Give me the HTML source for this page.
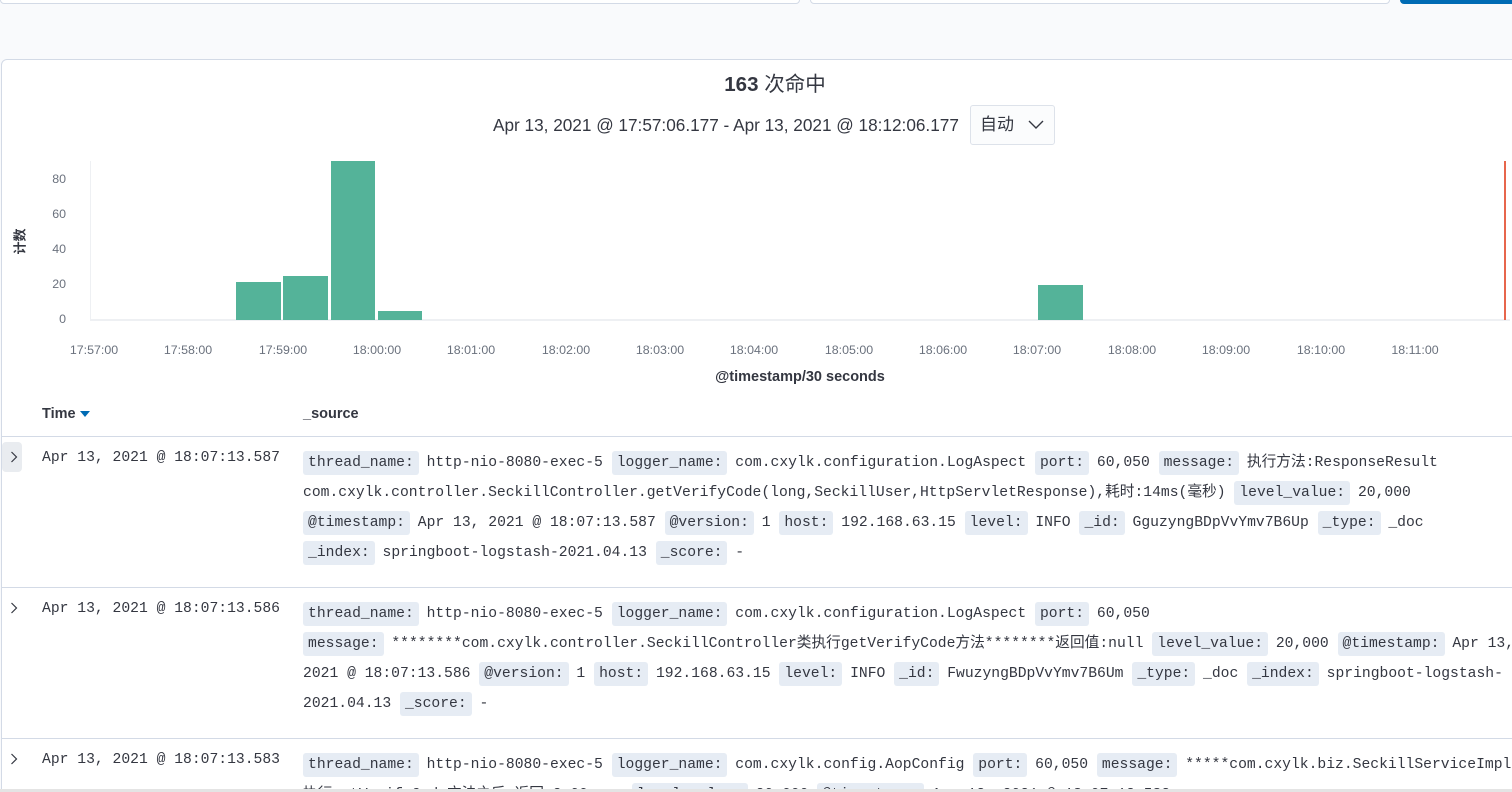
<!DOCTYPE html>
<html><head><meta charset="utf-8"><style>
*{margin:0;padding:0;box-sizing:border-box}
html,body{width:1512px;height:792px;overflow:hidden;background:#f9fafc;font-family:"Liberation Sans","Noto Sans CJK SC",sans-serif;color:#343741;position:relative}
.abs{position:absolute}
.card{position:absolute;left:1px;top:59px;width:1530px;height:760px;background:#fff;border:1px solid #d3dae6;border-radius:6px}
.mono{font-family:"Liberation Mono","Noto Sans CJK SC",monospace;font-size:14.7px;white-space:nowrap;color:#343741}
.ln{position:absolute;left:303px;height:30px;line-height:30px}
.p{background:#e6ecf4;border-radius:3px;padding:4px 5px;margin-right:-1px}
.sep{position:absolute;left:1px;width:1512px;height:1px;background:#d3dae6}
.xl{position:absolute;top:343px;font-size:12.4px;color:#6a717d;width:80px;text-align:center}
.yl{position:absolute;left:40px;font-size:12.4px;color:#6a717d;width:26px;text-align:right}
.bar{position:absolute;background:#54b399}
</style></head><body>
<div class="abs" style="left:0;top:-6px;width:800px;height:10px;background:#fff;border:1px solid #d3dae6;border-radius:4px"></div>
<div class="abs" style="left:810px;top:-6px;width:580px;height:10px;background:#fff;border:1px solid #d3dae6;border-radius:4px"></div>
<div class="abs" style="left:1400px;top:-6px;width:120px;height:10px;background:#006bb4;border-radius:4px"></div>
<div class="card"></div>
<div class="abs" style="left:0;top:72px;width:1550px;text-align:center;font-size:20.5px;line-height:26px"><b>163</b> 次命中</div>
<div class="abs" style="left:493px;top:113px;font-size:17.2px;line-height:24px">Apr 13, 2021 @ 17:57:06.177 - Apr 13, 2021 @ 18:12:06.177</div>
<div class="abs" style="left:970px;top:105px;width:85px;height:40px;border:1px solid #dde2ea;border-radius:3px;background:#fbfcfd;font-size:17px;line-height:38px;padding-left:9px">自动<svg style="position:absolute;left:57px;top:14px" width="16" height="10" viewBox="0 0 16 10"><path d="M1 1l7 7 7-7" fill="none" stroke="#343741" stroke-width="1.4"/></svg></div>
<div class="abs" style="left:90px;top:161px;width:1px;height:159px;background:#eef0f3"></div>
<div class="abs" style="left:90px;top:319px;width:1420px;height:2px;background:#eef0f3"></div>
<div class="yl" style="top:172px">80</div>
<div class="yl" style="top:207px">60</div>
<div class="yl" style="top:242px">40</div>
<div class="yl" style="top:277px">20</div>
<div class="yl" style="top:312px">0</div>
<div class="abs" style="left:4px;top:232px;font-size:13px;font-weight:bold;transform:rotate(-90deg);transform-origin:center;width:30px;text-align:center">计数</div>
<div class="bar" style="left:236px;top:282px;width:45px;height:38px"></div>
<div class="bar" style="left:283px;top:276px;width:45px;height:44px"></div>
<div class="bar" style="left:331px;top:161px;width:44px;height:159px"></div>
<div class="bar" style="left:378px;top:311px;width:44px;height:9px"></div>
<div class="bar" style="left:1038px;top:285px;width:45px;height:35px"></div>
<div class="abs" style="left:1504px;top:161px;width:2px;height:159px;background:#e7664c"></div>
<div class="xl" style="left:54px">17:57:00</div>
<div class="xl" style="left:148px">17:58:00</div>
<div class="xl" style="left:243px">17:59:00</div>
<div class="xl" style="left:337px">18:00:00</div>
<div class="xl" style="left:431px">18:01:00</div>
<div class="xl" style="left:526px">18:02:00</div>
<div class="xl" style="left:620px">18:03:00</div>
<div class="xl" style="left:714px">18:04:00</div>
<div class="xl" style="left:809px">18:05:00</div>
<div class="xl" style="left:903px">18:06:00</div>
<div class="xl" style="left:997px">18:07:00</div>
<div class="xl" style="left:1092px">18:08:00</div>
<div class="xl" style="left:1186px">18:09:00</div>
<div class="xl" style="left:1281px">18:10:00</div>
<div class="xl" style="left:1375px">18:11:00</div>
<div class="abs" style="left:0;top:368px;width:1600px;text-align:center;font-size:14.5px;font-weight:bold;line-height:18px">@timestamp/30 seconds</div>
<div class="abs" style="left:42px;top:406px;font-size:14.5px;font-weight:bold">Time <svg width="10" height="6" viewBox="0 0 10 6" style="vertical-align:middle"><path d="M0 0h10L5 6z" fill="#006bb4"/></svg></div>
<div class="abs" style="left:303px;top:406px;font-size:14.5px;font-weight:bold">_source</div>
<div class="sep" style="top:436px"></div>
<div class="sep" style="top:587px"></div>
<div class="sep" style="top:738px"></div>
<div class="abs" style="left:2px;top:442px;width:20px;height:30px;background:#e9ecf0;border-radius:4px"></div>
<svg class="abs" style="left:10px;top:451px" width="8" height="12" viewBox="0 0 8 12"><path d="M1.5 1l5 5-5 5" fill="none" stroke="#343741" stroke-width="1.2"/></svg>
<div class="abs mono" style="left:42px;top:448px;line-height:20px">Apr 13, 2021 @ 18:07:13.587</div>
<div class="ln mono" style="top:448px"><span class="p">thread_name:</span> http-nio-8080-exec-5 <span class="p">logger_name:</span> com.cxylk.configuration.LogAspect <span class="p">port:</span> 60,050 <span class="p">message:</span> 执行方法:ResponseResult</div>
<div class="ln mono" style="top:478px">com.cxylk.controller.SeckillController.getVerifyCode(long,SeckillUser,HttpServletResponse),耗时:14ms(毫秒) <span class="p">level_value:</span> 20,000</div>
<div class="ln mono" style="top:508px"><span class="p">@timestamp:</span> Apr 13, 2021 @ 18:07:13.587 <span class="p">@version:</span> 1 <span class="p">host:</span> 192.168.63.15 <span class="p">level:</span> INFO <span class="p">_id:</span> GguzyngBDpVvYmv7B6Up <span class="p">_type:</span> _doc</div>
<div class="ln mono" style="top:538px"><span class="p">_index:</span> springboot-logstash-2021.04.13 <span class="p">_score:</span>  -</div>
<svg class="abs" style="left:10px;top:602px" width="8" height="12" viewBox="0 0 8 12"><path d="M1.5 1l5 5-5 5" fill="none" stroke="#343741" stroke-width="1.2"/></svg>
<div class="abs mono" style="left:42px;top:599px;line-height:20px">Apr 13, 2021 @ 18:07:13.586</div>
<div class="ln mono" style="top:599px"><span class="p">thread_name:</span> http-nio-8080-exec-5 <span class="p">logger_name:</span> com.cxylk.configuration.LogAspect <span class="p">port:</span> 60,050</div>
<div class="ln mono" style="top:629px"><span class="p">message:</span> ********com.cxylk.controller.SeckillController类执行getVerifyCode方法********返回值:null <span class="p">level_value:</span> 20,000 <span class="p">@timestamp:</span> Apr 13,</div>
<div class="ln mono" style="top:659px">2021 @ 18:07:13.586 <span class="p">@version:</span> 1 <span class="p">host:</span> 192.168.63.15 <span class="p">level:</span> INFO <span class="p">_id:</span> FwuzyngBDpVvYmv7B6Um <span class="p">_type:</span> _doc <span class="p">_index:</span> springboot-logstash-</div>
<div class="ln mono" style="top:689px">2021.04.13 <span class="p">_score:</span>  -</div>
<svg class="abs" style="left:10px;top:753px" width="8" height="12" viewBox="0 0 8 12"><path d="M1.5 1l5 5-5 5" fill="none" stroke="#343741" stroke-width="1.2"/></svg>
<div class="abs mono" style="left:42px;top:750px;line-height:20px">Apr 13, 2021 @ 18:07:13.583</div>
<div class="ln mono" style="top:750px"><span class="p">thread_name:</span> http-nio-8080-exec-5 <span class="p">logger_name:</span> com.cxylk.config.AopConfig <span class="p">port:</span> 60,050 <span class="p">message:</span> *****com.cxylk.biz.SeckillServiceImpl</div>
<div class="ln mono" style="top:780px">执行getVerifyCode方法之后,返回 2,00 ... <span class="p">level_value:</span> 20,000 <span class="p">@timestamp:</span> Apr 13, 2021 @ 18:07:13.583</div>
<div class="abs" style="left:0;top:789px;width:1512px;height:3px;background:#e4e4e4"></div>
</body></html>
